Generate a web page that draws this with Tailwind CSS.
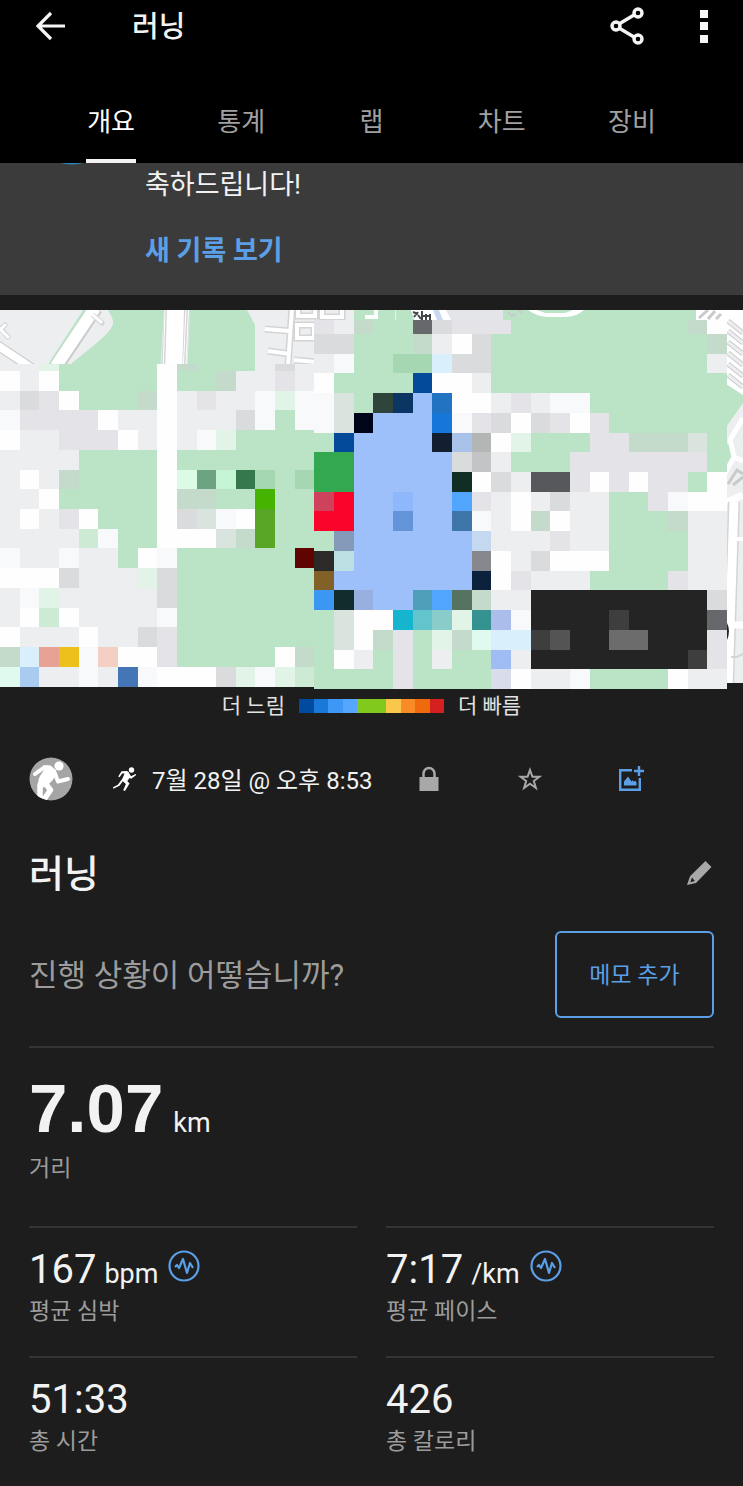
<!DOCTYPE html>
<html lang="ko">
  <head>
    <meta charset="UTF-8" />
    <meta name="viewport" content="width=device-width, initial-scale=1.0" />
    <title>러닝</title>
    <script src="https://cdn.jsdelivr.net/npm/@tailwindcss/browser@4"></script>
  </head>
  <body
    class="bg-[#1d1d1d] text-[#f2f2f2] min-h-screen font-[Roboto,'Noto_Sans_CJK_KR',sans-serif]"
  >
    <header class="bg-black">
      <div class="flex items-center h-[52px] pl-[34px] pr-[29px]">
        <button aria-label="뒤로">
          <svg class="block w-8 h-8" viewBox="0 0 32 32" fill="none" stroke="#f5f5f5" stroke-width="3.2">
            <path d="M31 16H4M17 3 4 16l13 13" />
          </svg>
        </button>
        <h1 class="ml-[66px] pt-0.5 text-[29px] leading-10 font-medium">러닝</h1>
        <button class="ml-auto" aria-label="공유">
          <svg class="block w-9 h-10" viewBox="0 0 36 40" fill="none" stroke="#f5f5f5" stroke-width="3.4">
            <path d="m10 18 15-9M10 22l15 9" />
            <circle cx="7" cy="20" r="4" />
            <circle cx="29" cy="7" r="4" />
            <circle cx="29" cy="33" r="4" />
          </svg>
        </button>
        <button class="ml-[49px]" aria-label="더보기">
          <svg class="block w-5 h-9" viewBox="0 0 20 36" fill="#f5f5f5">
            <path d="M6 2h8v8H6zM6 14h8v8H6zM6 27h8v8H6z" />
          </svg>
        </button>
      </div>

      <nav class="grid grid-cols-5 px-[46px] pt-[34px] text-[26px] leading-[73px] text-[#a0a0a0]">
        <a href="#" class="flex flex-col items-center text-white">
          <span>개요</span>
          <span class="w-[50px] h-1 bg-[#f2f2f2]"></span>
        </a>
        <a href="#" class="text-center">통계</a>
        <a href="#" class="text-center">랩</a>
        <a href="#" class="text-center">차트</a>
        <a href="#" class="text-center">장비</a>
      </nav>
    </header>

    <section class="flex h-[132px] bg-[#3b3b3b] overflow-hidden">
      <div class="w-[145px] shrink-0">
        <svg class="block w-full h-3" viewBox="0 0 145 12">
          <ellipse cx="72" cy="0" rx="10" ry="1.500" fill="#2f80b4" />
        </svg>
      </div>
      <div>
        <p class="text-[27px] leading-11">축하드립니다!</p>
        <a href="#" class="block mt-[22px] text-[27px] leading-11 font-bold text-[#5b9fe6]">새 기록 보기</a>
      </div>
    </section>

    <section class="mt-[15px]">
      <svg id="map" class="block w-full" viewBox="0 0 743 379" role="img" aria-label="경로 지도">
        <g id="streets" fill="none">
          <path fill="#edeef0" d="M0 0h480v64H0z" />
          <path fill="#bbe3c6" d="M108 0q6 10 5 14-2 7-14 17T72 53l-6 11h94l4-64zM190 0h57l8 15v49h-68z" />
          <!-- diagonal roads, top left -->
          <path stroke="#bbe3c6" stroke-width="3" d="M85 0 50 54" />
          <path stroke="#c9cacc" stroke-width="14" d="m96-2-39 58" />
          <path stroke="#fff" stroke-width="12" d="m95-2-39 58" />
          <path stroke="#c9cacc" stroke-width="10" d="m-3 35 36 24" />
          <path stroke="#fff" stroke-width="8" d="m-3 35 36 24" />
          <path stroke="#d3d4d6" stroke-width="5" stroke-linecap="round" d="m94 6 8 7M0 18l8 9M0 20l5-5" />
          <path stroke="#fff" stroke-width="3" stroke-linecap="round" d="m93 5 8 7M-1 18l9 9M0 20l5-5" />
          <!-- main vertical road -->
          <path fill="#d5d6d8" d="M164 0h26l-4 64h-25z" />
          <path fill="#fff" d="M167 0h17l-2 64h-17z" />
          <path stroke="#fff" d="m165 0-2 64M186 0l-3 64M188.500 0l-3 64" />
          <!-- side streets -->
          <g stroke="#d3d4d6" stroke-width="7">
            <path d="m292-2-4 58M265 19l24 2M268 41l22 3M294 50l22 2" />
            <path d="M298-2v8h17V-2M297 15h17v13h-17zM322-2v9h20V-2M363-2v9h14V-2" />
          </g>
          <g stroke="#fff" stroke-width="4">
            <path d="m292-2-4 58M265 19l24 2M268 41l22 3M294 50l22 2" />
            <path d="M298-2v8h17V-2M297 15h17v13h-17zM322-2v9h20V-2" />
          </g>
          <path fill="#bbe3c6" d="M354 0h41v12h-41zM396 0h27v12h-27z" />
          <path stroke="#fff" stroke-width="4" d="M365 7h11V-2" />
          <path fill="#e4e5e9" d="M432 0h80v24h-80z" />
          <path fill="#fff" d="m411 0 4 12h37l-6-12z" />
          <path fill="#c8d9f0" d="M433 0h6l4 10h-6z" />
          <path stroke="#45474a" stroke-width="2" d="m413 2 5 2M414 7l4-5M422 1v9M418 5l3 4M426 4v6M430 4v6M423 6h6" />
          <!-- park, top right -->
          <path fill="#bbe3c6" d="M503 0h205v12H503z" />
          <path fill="#fff" d="M528 0h56q-8 7-18 7h-19q-11-1-19-7z" />
          <path fill="#bbe3c6" d="M537 0h36l-8 3h-20z" />
          <path stroke="#c9cacc" stroke-width="2" d="m508 2 4 4 4-2M518 0l4 3" />
          <path fill="#fff" d="M696 0h47v24h-47z" />
          <path stroke="#c9cacc" stroke-width="3" d="m699 8 9-8M708 9l7-8M716 9l5-5" />
          <!-- strip on the right edge -->
          <path fill="#edeef0" d="M726 0h17v373h-17z" />
          <path fill="#fff" d="M726 0h17v92l-17-18z" />
          <path stroke="#c9cacc" stroke-width="5" d="m728 11 15 12M728 21l15 12M728 32l15 12M728 43l15 12M728 54l15 12M728 65l15 12" />
          <path stroke="#edeef0" stroke-width="3" d="m728 11 15 12M728 21l15 12M728 32l15 12M728 43l15 12M728 54l15 12M728 65l15 12" />
          <path fill="#bbe3c6" d="m726 74 17 11v8l-17 24zM726 134l4 0 5 16-9 14z" />
          <path stroke="#fff" stroke-width="5" d="m743 108-13 22 4 17 9 4M734 147l-10 18" />
          <path stroke="#c9cacc" stroke-width="3" d="m728 174 9-14 6 4M733 175l10-8" />
          <path stroke="#fff" stroke-width="7" d="m743 185-16 7" />
          <path stroke="#d3d4d6" stroke-width="12" d="m734 192-6 187" />
          <path stroke="#fff" stroke-width="9" d="m734 192-6 187" />
          <path stroke="#fff" stroke-width="4" d="M743 229h-11" />
          <path stroke="#fff" stroke-width="7" d="M743 315h-15" />
          <path stroke="#d3d4d6" stroke-width="2" d="M731 347h6l6-3" />
          <path fill="#242424" d="M727 313q4 8 0 17z" />
          <path fill="#1d1d1d" d="M726 373h17v6h-17z" />
        </g>
        <g id="tiles" shape-rendering="crispEdges"></g>
      </svg>
    </section>

    <div class="flex items-center justify-center gap-[14px] h-[34px] text-[21px] leading-[34px] text-[#e2e2e2]">
      <span>더 느림</span>
      <div class="grid grid-cols-10 w-[145px] h-[14px]">
        <span class="bg-[#004a9f]"></span>
        <span class="bg-[#1a78d8]"></span>
        <span class="bg-[#3f97f5]"></span>
        <span class="bg-[#57a6fd]"></span>
        <span class="bg-[#82c91e] col-span-2"></span>
        <span class="bg-[#f9c74b]"></span>
        <span class="bg-[#f98b26]"></span>
        <span class="bg-[#ef6a0d]"></span>
        <span class="bg-[#d42020]"></span>
      </div>
      <span>더 빠름</span>
    </div>

    <main class="px-[29px]">
      <div class="flex items-center h-11 mt-[34px]">
        <svg class="w-11 h-11 shrink-0" viewBox="0 0 44 44">
          <defs>
            <clipPath id="disc"><circle cx="22" cy="22" r="21.500" /></clipPath>
          </defs>
          <g clip-path="url(#disc)">
            <circle cx="22" cy="22" r="22" fill="#a5a5a5" />
            <circle cx="30" cy="9" r="4.600" fill="#fff" />
            <path fill="#fff" d="M14 8.500q7-1 11 3 3 3 1 8-2 4-6 7.500l-10 6q-2-9 1-14l4-6z" />
            <g fill="none" stroke="#fff" stroke-linecap="round" stroke-linejoin="round">
              <path stroke-width="4" d="m6 17 9-6.500h6M25 14l4 10.500 10-2.500" />
              <path stroke-width="5.500" d="M11 28v14M16 26l5.500 7-5.500 8" />
            </g>
          </g>
        </svg>
        <svg class="w-6 h-6 ml-10 shrink-0" viewBox="0 0 24 24" fill="#fff">
          <circle cx="18.500" cy="3" r="2.700" />
          <path
            d="M8.500 4.200 14 4.100q2 .5 2.300 2.500l1.700 2.600 4.600-2.300.6 1.200-5 3.700-1.700-.8-2.200 3 2.200 2.600-4.500 7.400-1.800-.7 2.700-6.200-3.100-2.800-3.300 4.500L.4 21.700 0 20.300l4.900-2.600 4.400-6 2.300-5.100-2.500-.2-2.600 3.900-1.300-.8z"
          />
        </svg>
        <time class="ml-[15px] pt-1 text-[24px] leading-8 whitespace-nowrap" datetime="07-28T20:53">7월 28일 @ 오후 8:53</time>
        <div class="flex-1 grid grid-cols-3 justify-items-center ml-[6px] mr-8">
          <button aria-label="비공개">
            <svg class="block w-6 h-7" viewBox="0 0 24 28">
              <path fill="#a8a8a8" d="M2.500 12h19v14h-19z" />
              <path fill="none" stroke="#a8a8a8" stroke-width="2.500" d="M6.500 12V8.500a5.500 5.500 0 0 1 11 0V12" />
            </svg>
          </button>
          <button aria-label="즐겨찾기">
            <svg class="block w-6 h-7" viewBox="0 0 24 28" fill="none" stroke="#a8a8a8" stroke-width="2">
              <path d="m12 5 2.400 6.700h7L15.800 16l2.100 7-5.900-4.200L6.100 23l2.100-7-5.600-4.300h7z" />
            </svg>
          </button>
          <button aria-label="사진 추가">
            <svg class="block w-[26px] h-7" viewBox="0 0 26 28">
              <path fill="none" stroke="#5b9fe6" stroke-width="2.400" d="M14 5.200H2.200v19.600h19.600V13M21 1v10M16 6h10" />
              <path fill="#5b9fe6" d="M6 20.500v-4l4-5 3.500 5 1.200-1.200 1.200 1.400 1.200-1.200 1.400 2v3z" />
            </svg>
          </button>
        </div>
      </div>

      <div class="flex items-center justify-between h-14 mt-11">
        <h2 class="pt-0.5 text-[38px] leading-14 font-medium">러닝</h2>
        <button aria-label="이름 편집">
          <svg class="block w-7 h-7" viewBox="0 0 28 28" fill="#a8a8a8">
            <path fill-rule="evenodd" d="m19.500 2 6 6-15.500 16-9 2 3-8.800zM6 18.500l-1.700 4.700 4.500-1.200z" />
          </svg>
        </button>
      </div>

      <div class="flex items-center justify-between mt-[30px]">
        <p class="pt-0.5 text-[31px] leading-10 text-[#9c9c9c]">진행 상황이 어떻습니까?</p>
        <button class="w-[159px] h-[87px] pt-1 rounded-md border-2 border-[#5b9fe6] text-[23px] text-[#5b9fe6]">
          메모 추가
        </button>
      </div>

      <div class="mt-[28px] h-[180px] border-t-2 border-[#343434] pt-[27px]">
        <p class="flex items-baseline gap-[10px]">
          <span class="text-[69px] leading-[68px] font-bold font-['Liberation_Sans',sans-serif]">7.07</span>
          <span class="text-[27px] leading-none">km</span>
        </p>
        <p class="mt-[10px] text-[23px] leading-8 text-[#9c9c9c]">거리</p>
      </div>

      <dl class="grid grid-cols-2 gap-x-[29px]">
        <div class="flex flex-col-reverse justify-end h-[130px] border-t-2 border-[#343434] pt-4">
          <dt class="text-[23px] leading-8 text-[#9c9c9c]">평균 심박</dt>
          <dd class="flex items-baseline gap-2 h-[52px]">
            <span class="text-[40px] leading-[52px]">167</span>
            <span class="text-[27px] leading-none">bpm</span>
            <svg class="w-8 h-8 ml-[2px] mt-[6px] self-start" viewBox="0 0 32 32" fill="none" stroke="#5b9fe6">
              <circle cx="16" cy="16" r="14.500" stroke-width="2.200" />
              <path stroke-width="2.200" stroke-linejoin="round" d="m7 17 2-2 2 3 4-9 4 14 3-10 3 5" />
            </svg>
          </dd>
        </div>
        <div class="flex flex-col-reverse justify-end h-[130px] border-t-2 border-[#343434] pt-4">
          <dt class="text-[23px] leading-8 text-[#9c9c9c]">평균 페이스</dt>
          <dd class="flex items-baseline gap-2 h-[52px]">
            <span class="text-[40px] leading-[52px]">7:17</span>
            <span class="text-[27px] leading-none">/km</span>
            <svg class="w-8 h-8 ml-[2px] mt-[6px] self-start" viewBox="0 0 32 32" fill="none" stroke="#5b9fe6">
              <circle cx="16" cy="16" r="14.500" stroke-width="2.200" />
              <path stroke-width="2.200" stroke-linejoin="round" d="m7 17 2-2 2 3 4-9 4 14 3-10 3 5" />
            </svg>
          </dd>
        </div>
        <div class="flex flex-col-reverse justify-end h-[130px] border-t-2 border-[#343434] pt-4">
          <dt class="text-[23px] leading-8 text-[#9c9c9c]">총 시간</dt>
          <dd class="text-[40px] leading-[52px]">51:33</dd>
        </div>
        <div class="flex flex-col-reverse justify-end h-[130px] border-t-2 border-[#343434] pt-4">
          <dt class="text-[23px] leading-8 text-[#9c9c9c]">총 칼로리</dt>
          <dd class="text-[40px] leading-[52px]">426</dd>
        </div>
      </dl>
    </main>

    <script>
      // One character per tile
      const palette = {
        ".": "#edeef0", w: "#fefefe", f: "#f7f9fa", l: "#e4e4e8", d: "#dadbdd",
        g: "#bbe3c6", c: "#c4dacb", p: "#d9e4de", m: "#e2f3e7", q: "#cdead5",
        h: "#a5d8b2", M: "#dcfbe6", n: "#c6f5d6", x: "#e0faef", a: "#6ca383",
        b: "#36784e", e: "#46b300", i: "#59a626", r: "#600402", s: "#d9effc",
        t: "#e7a295", u: "#edc01b", v: "#f3d0c3", y: "#a8cbef", z: "#4476b6",
        A: "#66686b", B: "#044a9a", C: "#2f443a", D: "#0b3562", E: "#9dc0fb",
        F: "#2273c2", G: "#000519", H: "#1776d9", I: "#131e31", J: "#a9c2ea",
        K: "#b4b5b5", L: "#33a850", N: "#c3c4c5", O: "#112e24", P: "#56585b",
        Q: "#cf425c", R: "#fa042b", S: "#8fb7fb", T: "#52a5fd", U: "#6394da",
        V: "#3f76aa", W: "#8599b8", X: "#c4d8f0", Y: "#2c2a28", Z: "#bcdfe4",
        1: "#86888d", 2: "#826128", 3: "#0c223c", 4: "#3b97f2", 5: "#122b2c",
        6: "#98b0df", 7: "#4f9fbb", 8: "#55735f", 9: "#15b5cf", 0: "#62c4cd",
        j: "#89ccca", k: "#349390", o: "#abbdeb", "!": "#9fbcf4", "+": "#d9dcea",
        "#": "#242424", "@": "#3e3e3e", "%": "#545454", "&": "#6c6c6c",
      };

      const left = [
        "w.wgggggwggc..l.",
        ".dlwgggcw.l..fmf",
        "fllllw..w...dfgf",
        "w..lllw.w.fmgggg",
        "....ggggwggggggg",
        ".w.cggggwManbhgh",
        "..wgggggwccggegg",
        ".w.lwgggwdpfwigg",
        "....qfggwwwpcigg",
        "f..f..gwfggggggr",
        "wwwd...mdggggggg",
        ".fm.....dggggggg",
        ".wqw....fggggggg",
        "w...w..dlggggggg",
        "cstufvwwlgggggwc",
        "xy..f.zfwwwdmfmq",
      ];

      const right = [
        "ddgggc.wdgggggggggggc",
        ".fgghhsddggggggggggg.",
        "wggggBww.gggggggggggg",
        "fpgCDEFww.l.ffggggggg",
        "fpGEEEHfldwdlwlgggggg",
        "gBEEEEIJKwmgggllcccpg",
        "LLEEEEEdN.ggglllllllg",
        "LLEEEEEOwd.PPlwlwllgw",
        "QREESEETl.w.d..gglfww",
        "RREEUEEVf.wcw..gggc..",
        "gWEEEEEEX...l..gggg..",
        "YZEEEEEE1w.dwwwgggg..",
        "2EEEEEEE3wl...ggggl..",
        "456EE7T8c..#########d",
        "gpww90jmkof####@####A",
        "gpwclgmcxss@%##&&###l",
        "gw.glg.gg!.########@l",
        "gggglgggg+w..fggggw..",
      ];

      const size = 19.65;
      const tiles = document.getElementById("tiles");

      function tile(char, col, y, height) {
        const rect = document.createElementNS("http://www.w3.org/2000/svg", "rect");
        const x = Math.round(col * size);
        rect.setAttribute("x", x);
        rect.setAttribute("y", y);
        rect.setAttribute("width", Math.round((col + 1) * size) - x);
        rect.setAttribute("height", height);
        rect.setAttribute("fill", palette[char]);
        tiles.appendChild(rect);
      }

      function drawRows(rows, startCol, startY) {
        rows.forEach((row, r) => {
          const y = Math.round(startY + r * 19.72);
          const height = Math.round(startY + (r + 1) * 19.72) - y;
          [...row].forEach((char, c) => tile(char, startCol + c, y, height));
        });
      }

      // Short first rows, then the full ones
      [..."..mgggggwcggg.d."].forEach((char, c) => tile(char, c, 54, 7));
      [..."l.cggAdlllgggggggggcw"].forEach((char, c) => tile(char, 16 + c, 10, 14));
      drawRows(left, 0, 61);
      drawRows(right, 16, 24);
    </script>
  </body>
</html>
